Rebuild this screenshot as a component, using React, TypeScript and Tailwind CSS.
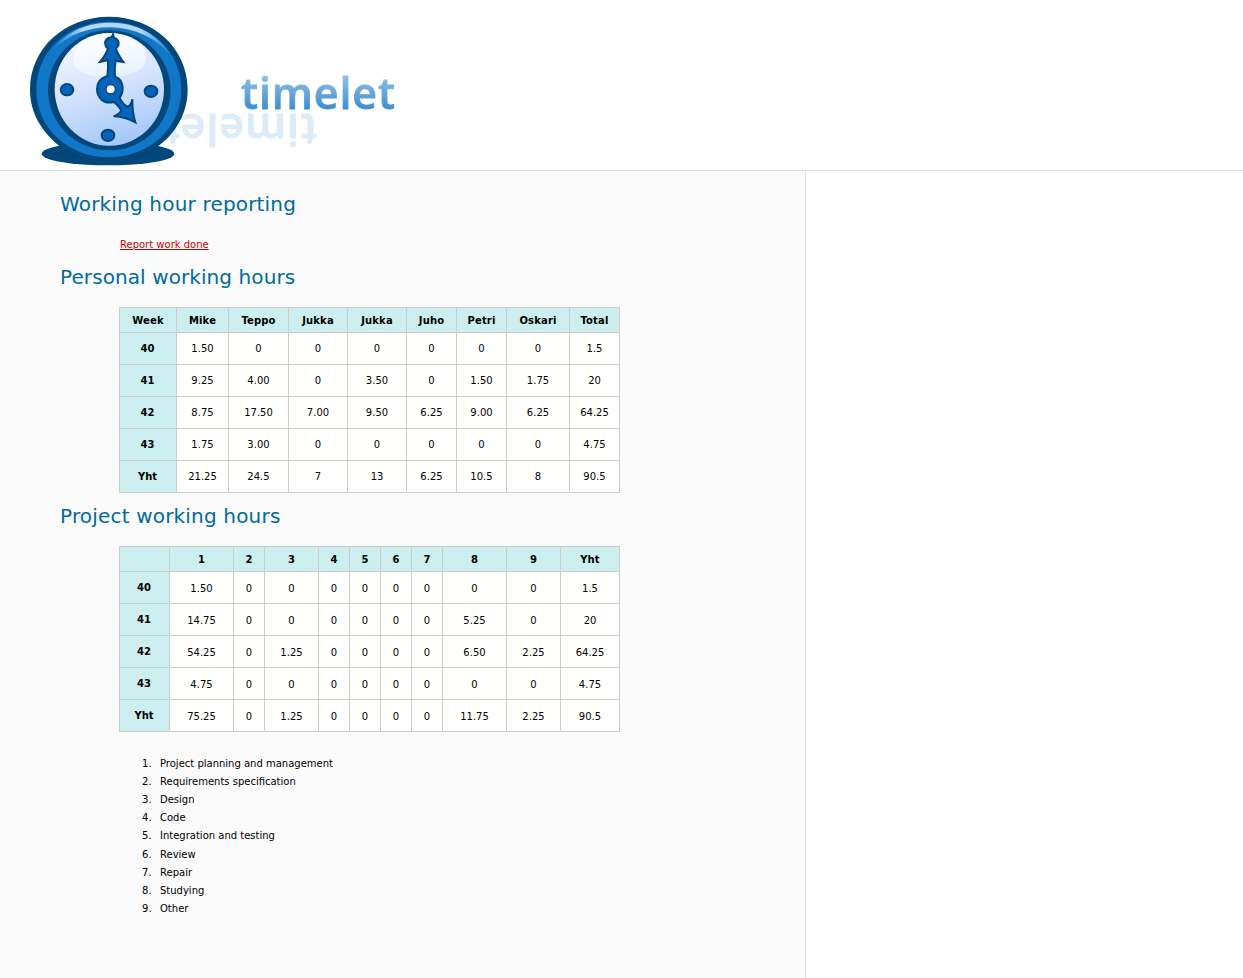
import React from "react";

type TableData = {
  widths: number[];
  head: string[];
  rows: string[][];
  cellPad: string;
};

const personal: TableData = {
  widths: [57, 52, 60, 59, 59, 50, 50, 63, 50],
  head: ["Week", "Mike", "Teppo", "Jukka", "Jukka", "Juho", "Petri", "Oskari", "Total"],
  rows: [
    ["40", "1.50", "0", "0", "0", "0", "0", "0", "1.5"],
    ["41", "9.25", "4.00", "0", "3.50", "0", "1.50", "1.75", "20"],
    ["42", "8.75", "17.50", "7.00", "9.50", "6.25", "9.00", "6.25", "64.25"],
    ["43", "1.75", "3.00", "0", "0", "0", "0", "0", "4.75"],
    ["Yht", "21.25", "24.5", "7", "13", "6.25", "10.5", "8", "90.5"],
  ],
  cellPad: "pt-0",
};

const project: TableData = {
  widths: [50, 64, 31, 54, 31, 31, 31, 31, 64, 54, 59],
  head: ["", "1", "2", "3", "4", "5", "6", "7", "8", "9", "Yht"],
  rows: [
    ["40", "1.50", "0", "0", "0", "0", "0", "0", "0", "0", "1.5"],
    ["41", "14.75", "0", "0", "0", "0", "0", "0", "5.25", "0", "20"],
    ["42", "54.25", "0", "1.25", "0", "0", "0", "0", "6.50", "2.25", "64.25"],
    ["43", "4.75", "0", "0", "0", "0", "0", "0", "0", "0", "4.75"],
    ["Yht", "75.25", "0", "1.25", "0", "0", "0", "0", "11.75", "2.25", "90.5"],
  ],
  cellPad: "pt-[2px]",
};

const tasks = [
  "Project planning and management",
  "Requirements specification",
  "Design",
  "Code",
  "Integration and testing",
  "Review",
  "Repair",
  "Studying",
  "Other",
];

function HoursTable({ data }: { data: TableData }) {
  return (
    <table className="ml-[119px] w-[501px] table-fixed border-separate border-spacing-0 border-l border-t border-[#cccccc] text-center text-[10px] leading-3 text-black">
      <colgroup>
        {data.widths.map((w, i) => (
          <col key={i} style={{ width: w }} />
        ))}
      </colgroup>
      <thead>
        <tr className="h-[25px]">
          {data.head.map((h, i) => (
            <th key={i} className="border-b border-r border-[#cccccc] bg-[#cceeee] p-0 pt-[2px] font-bold tracking-[0.15px]">
              {h}
            </th>
          ))}
        </tr>
      </thead>
      <tbody>
        {data.rows.map((row) => (
          <tr key={row[0]} className="h-8">
            <th className="border-b border-r border-[#cccccc] bg-[#cceeee] p-0 pr-px font-bold">{row[0]}</th>
            {row.slice(1).map((v, i) => (
              <td key={i} className={`border-b border-r border-[#cccccc] bg-[#fffffd] p-0 ${data.cellPad}`}>
                {v}
              </td>
            ))}
          </tr>
        ))}
      </tbody>
    </table>
  );
}

function Clock() {
  return (
    <svg className="absolute left-5 top-[5px]" width="200" height="165" viewBox="0 0 600 495">
      <defs>
        <linearGradient id="face" x1="0.3" y1="0" x2="0.6" y2="1">
          <stop offset="0" stopColor="#f4f8ff" />
          <stop offset="0.5" stopColor="#d3e2fb" />
          <stop offset="1" stopColor="#a3c7f9" />
        </linearGradient>
        <linearGradient id="gloss" x1="0" y1="0" x2="0" y2="1">
          <stop offset="0" stopColor="#fff" stopOpacity="0.75" />
          <stop offset="1" stopColor="#fff" stopOpacity="0.45" />
        </linearGradient>
        <linearGradient id="shine" x1="0" y1="0" x2="1" y2="0">
          <stop offset="0" stopColor="#75b5e8" stopOpacity="0.3" />
          <stop offset="0.25" stopColor="#b4d6f0" />
          <stop offset="0.75" stopColor="#b4d6f0" />
          <stop offset="1" stopColor="#75b5e8" stopOpacity="0.3" />
        </linearGradient>
      </defs>
      <ellipse cx="264" cy="446" rx="199" ry="35" fill="#02477c" />
      <path d="M267 35C398 35 503 128 503 254C503 326 466 386 411 426C370 456 326 466 267 466C207 466 160 454 121 425C67 382 30 326 30 254C30 128 136 35 267 35Z" fill="#02477c" />
      <path d="M267 50C390 50 484 139 484 254C484 371 384 457 266 457C148 457 49 371 49 254C49 139 144 50 267 50Z" fill="#1178c9" />
      <path d="M102 130C145 76 202 53 274 53C346 53 415 86 450 149C407 98 346 70 274 67C204 66 148 90 102 130Z" fill="url(#shine)" />
      <ellipse cx="268" cy="256" rx="184" ry="180" fill="#02477c" />
      <ellipse cx="268" cy="253" rx="164" ry="169" fill="url(#face)" />
      <path d="M161 166C161 118 207 85 270 85C334 85 378 116 378 160C378 195 332 216 269 216C206 216 161 201 161 166Z" fill="url(#gloss)" />
      <g fill="#0763b8" stroke="#02477c" strokeWidth="6">
        <ellipse cx="141" cy="254" rx="19" ry="17" />
        <ellipse cx="393" cy="259" rx="19" ry="17" />
        <ellipse cx="264" cy="391" rx="19" ry="17" />
        <path d="M279 88L282 98C293 101 298 110 296 119C294 125 291 128 288 131C292 145 301 158 310 171L287 167C284 181 284 197 285 214C301 221 308 234 308 250C308 265 302 274 299 278C304 290 312 300 323 306C332 299 336 292 337 282C337 308 338 328 346 352C328 342 307 335 281 334C291 330 300 325 304 316C298 306 291 298 282 291C251 299 231 277 231 252C231 232 243 219 262 213C264 197 265 181 264 166L240 171C251 158 260 143 264 131C253 123 252 108 263 100C268 97 274 97 276 95Z" />
      </g>
      <circle cx="272" cy="253" r="14" fill="#fff" stroke="#02477c" strokeWidth="4" />
    </svg>
  );
}

export default function App() {
  return (
    <div className="flex h-[978px] w-[1243px] flex-col overflow-hidden bg-white font-['DejaVu_Sans',sans-serif]">
      <header className="relative h-[171px] shrink-0 border-b border-[#dddddd] font-['Open_Sans','Noto_Sans',sans-serif] text-[43px] font-semibold leading-[60px] tracking-[0.9px]">
        <div aria-hidden="true" className="absolute left-[162px] top-[100px] rotate-180 text-[#dcebf7] [-webkit-text-stroke:0.8px_#dcebf7]">
          timelet
        </div>
        <Clock />
        <div className="absolute left-[241px] top-[63px] bg-linear-to-b from-[#8fc0e4] from-20% to-[#4090d0] to-75% bg-clip-text text-transparent [-webkit-text-stroke:0.8px_transparent]">
          timelet
        </div>
      </header>
      <main className="w-[806px] grow border-r border-[#dddddd] bg-[#fafafa]">
        <h1 className="ml-[60px] pt-[18px] text-[20px] leading-[30px] tracking-[0.18px] text-[#006b9d]">Working hour reporting</h1>
        <p className="ml-[120px] mt-[17px] text-[10px] leading-[18px]">
          <a className="text-[#cc0000] underline" href="#report">Report work done</a>
        </p>
        <h2 className="ml-[60px] mt-[8px] text-[20px] leading-[30px] tracking-[0.09px] text-[#006b9d]">Personal working hours</h2>
        <div className="mt-[15px]"><HoursTable data={personal} /></div>
        <h2 className="ml-[60px] mt-[8px] text-[20px] leading-[30px] tracking-[0.18px] text-[#006b9d]">Project working hours</h2>
        <div className="mt-[15px]"><HoursTable data={project} /></div>
        <ol className="ml-[142px] mt-[22.9px] text-[10px] leading-[18.12px] text-black">
          {tasks.map((t, i) => (
            <li key={t} className="flex">
              <span className="w-[18px]">{i + 1}.</span>
              <span>{t}</span>
            </li>
          ))}
        </ol>
      </main>
    </div>
  );
}
